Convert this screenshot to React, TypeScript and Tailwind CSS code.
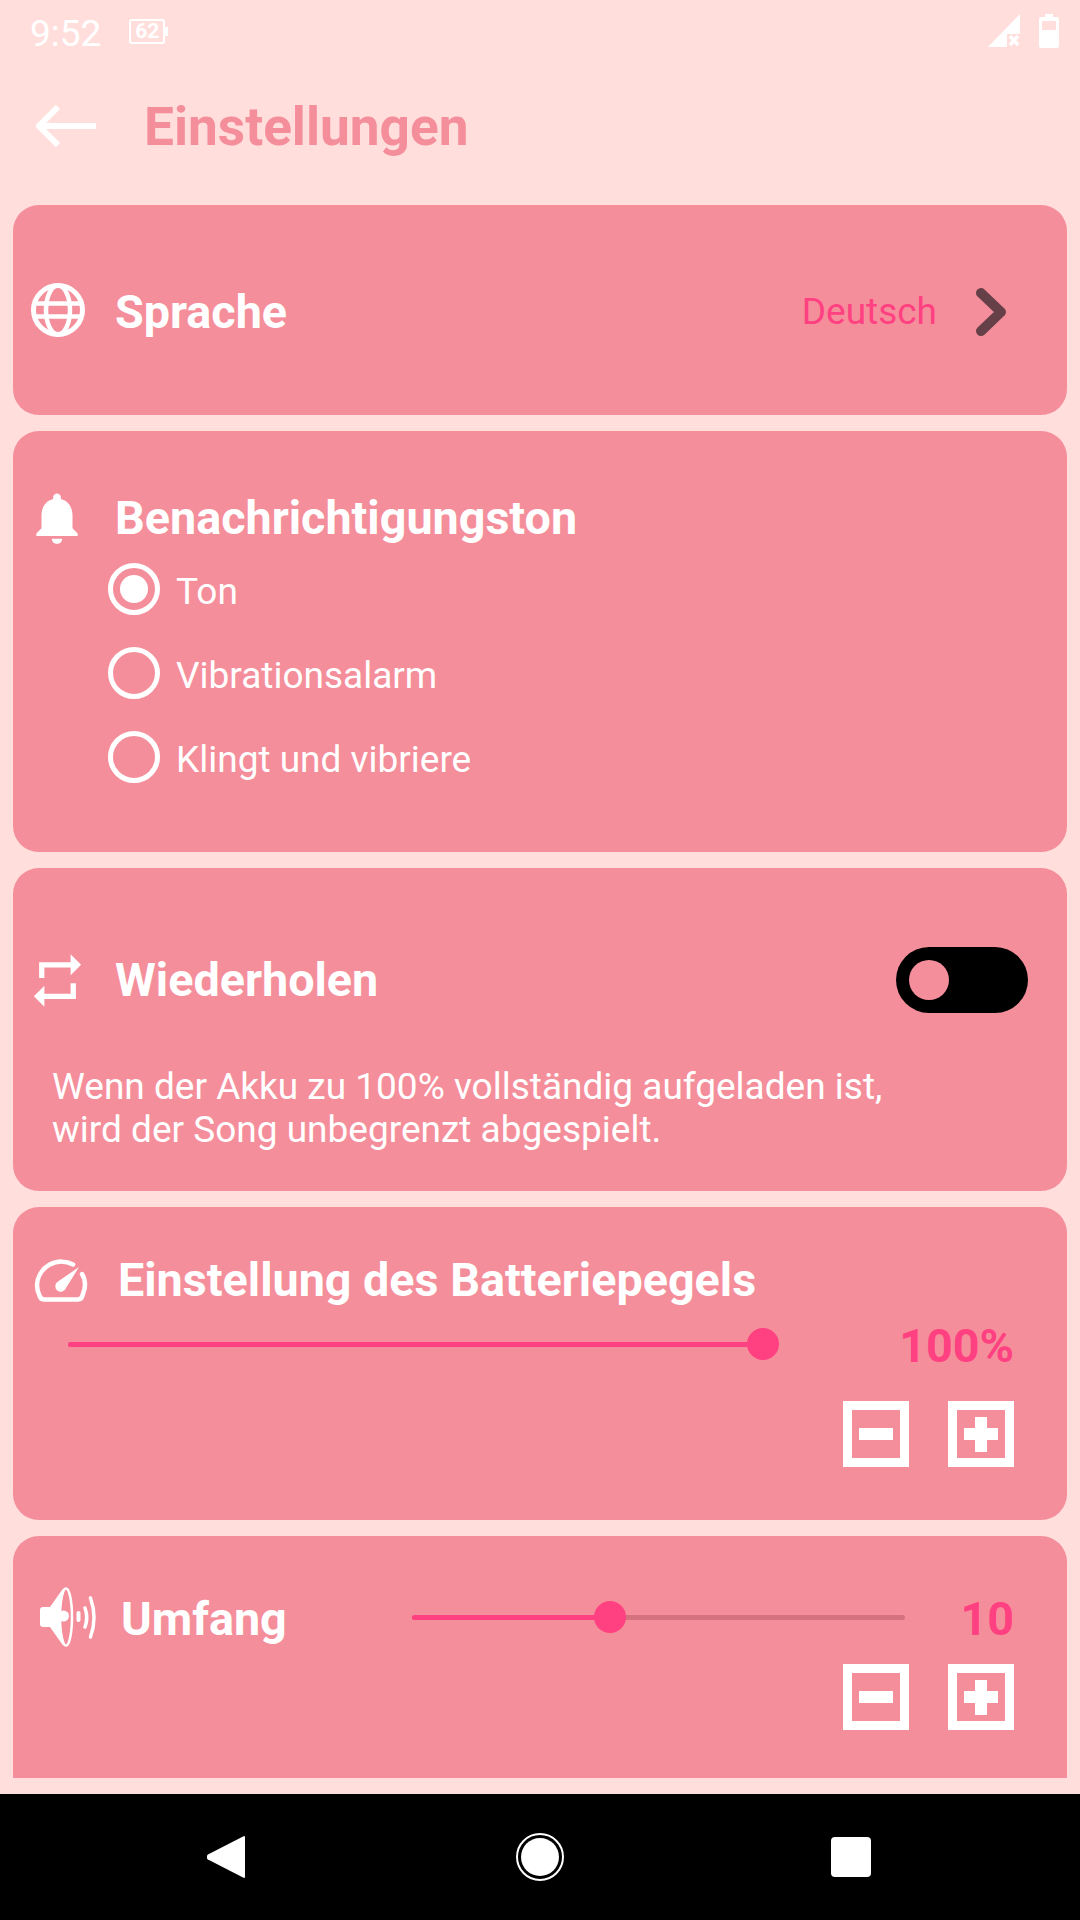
import React from "react";

const font = { fontFamily: "Roboto, sans-serif" };

function Globe() {
  return (
    <svg className="mb-[5px]" width="54" height="54" viewBox="0 0 54 54" fill="none" stroke="#fff" strokeWidth="5">
      <circle cx="27" cy="27" r="24.500" />
      <ellipse cx="27" cy="27" rx="12" ry="24.500" strokeWidth="4.500" />
      <path d="M4 20.500h46M4 33.500h46" strokeWidth="4.500" />
    </svg>
  );
}

function Bell() {
  return (
    <svg width="62" height="62" viewBox="0 0 24 24" fill="#fff">
      <path d="M12 22c1.100 0 2-.9 2-2h-4c0 1.100.89 2 2 2zm6-6v-5c0-3.070-1.640-5.640-4.500-6.320V4c0-.83-.67-1.500-1.500-1.500s-1.500.67-1.500 1.500v.68C7.630 5.360 6 7.920 6 11v5l-2 2v1h16v-1l-2-2z" />
    </svg>
  );
}

function Repeat() {
  return (
    <svg width="63" height="63" viewBox="0 0 24 24" fill="#fff">
      <path d="M7 7h10v3l4-4-4-4v3H5v6h2V7zm10 10H7v-3l-4 4 4 4v-3h12v-6h-2v4z" />
    </svg>
  );
}

function Gauge() {
  return (
    <svg width="54" height="44" viewBox="0 0 54 44" fill="none">
      <path d="M10 41.500h34a5 5 0 0 0 4.500-4C49.500 34 51 31 51 27c0-4-1-8-3-11M39 6.500A24.500 24.500 0 0 0 3 27c0 4 1 7.500 2.500 10.500a5 5 0 0 0 4.500 4" stroke="#fff" strokeWidth="4.500" strokeLinecap="round" />
      <path d="M45 9 32 30a5.500 5.500 0 1 1-8-6.500z" fill="#fff" />
    </svg>
  );
}

function Speaker() {
  return (
    <svg width="58" height="60" viewBox="0 0 58 60" fill="none">
      <path d="M3 20h7L22 3c1-1.500 2-2 3-1-3 8-4.500 17-4.500 28S22 50 25 58c-1 1-2 .5-3-1L10 40H3a3 3 0 0 1-3-3V23a3 3 0 0 1 3-3z" fill="#fff" />
      <circle cx="23.500" cy="29" r="5.500" fill="#fff" />
      <ellipse cx="26" cy="30" rx="6" ry="28.500" stroke="#fff" strokeWidth="2.500" />
      <path d="M38.500 26v7" stroke="#fff" strokeWidth="4" strokeLinecap="round" />
      <path d="M45 21q3.500 9.500 0 19" stroke="#fff" strokeWidth="3.500" strokeLinecap="round" />
      <path d="M50.500 11q7 19.500 0 39" stroke="#fff" strokeWidth="3.500" strokeLinecap="round" />
    </svg>
  );
}

function Radio({ on, label }: { on?: boolean; label: string }) {
  return (
    <div className="flex items-center h-[52px]">
      <div className="w-[52px] h-[52px] rounded-full border-[5px] border-white flex items-center justify-center">
        {on && <div className="w-[28px] h-[28px] rounded-full bg-white" />}
      </div>
      <span className="ml-[16px] mt-[4px] text-[37px] text-white leading-none">{label}</span>
    </div>
  );
}

function Box({ plus }: { plus?: boolean }) {
  return (
    <div className="relative w-[66px] h-[66px] border-[9px] border-white">
      <div className="absolute left-[7px] top-[18px] w-[34px] h-[12px] bg-white" />
      {plus && <div className="absolute left-[18px] top-[7px] w-[12px] h-[35px] bg-white" />}
    </div>
  );
}

function Boxes() {
  return (
    <div className="flex justify-end gap-[39px] pr-[53px]">
      <Box />
      <Box plus />
    </div>
  );
}

function Slider({ width, pos }: { width: number; pos: number }) {
  return (
    <div className="relative h-[5px] rounded-full bg-[#D4727F]" style={{ width }}>
      <div className="h-full rounded-full bg-[#FF4081]" style={{ width: pos }} />
      <div className="absolute top-[-14px] w-[32px] h-[32px] rounded-full bg-[#FF4081]" style={{ left: pos - 16 }} />
    </div>
  );
}

export default function App() {
  return (
    <div className="w-[1080px] h-[1920px] flex flex-col overflow-hidden bg-[#FFDEDC]" style={font}>
      {/* status bar */}
      <div className="h-[66px] shrink-0 flex items-start text-white">
        <span className="ml-[30px] mt-[15px] text-[37px] leading-[38px]">9:52</span>
        <div className="relative ml-[28px] mt-[19px] w-[36px] h-[25px] border-[2px] border-white rounded-[3px] flex items-center justify-center text-[21px] font-bold leading-none">
          62
          <div className="absolute right-[-5px] top-[6px] w-[3px] h-[9px] bg-white" />
        </div>
        <div className="ml-auto mt-[14px] flex gap-[19px] pr-[21px]">
          <svg width="32" height="33" viewBox="0 0 32 33">
            <path d="M32 0v20H19v13H0z" fill="#fff" />
            <path d="M22 22l8 9M30 22l-8 9" stroke="#fff" strokeWidth="3.500" />
          </svg>
          <svg width="20" height="34" viewBox="0 0 20 34">
            <path d="M6 0h8v3h4a2 2 0 0 1 2 2v27a2 2 0 0 1-2 2H2a2 2 0 0 1-2-2V5a2 2 0 0 1 2-2h4zM3 7v9h14V7z" fill="#fff" fillRule="evenodd" />
          </svg>
        </div>
      </div>

      {/* toolbar */}
      <div className="h-[139px] shrink-0 flex items-start">
        <svg className="ml-[36px] mt-[39px]" width="60" height="42" viewBox="0 0 60 42" fill="none" stroke="#fff" strokeWidth="6">
          <path d="M60 21H4M22 2 3 21l19 19" />
        </svg>
        <span className="ml-[48px] mt-[31px] text-[53.200px] leading-[60px] font-bold text-[#F58E9B]">Einstellungen</span>
      </div>

      {/* cards */}
      <div className="flex-1 flex flex-col gap-[16px] px-[13px] overflow-hidden">
        <section className="h-[210px] shrink-0 rounded-[26px] bg-[#F58E9B] flex items-center pl-[18px] pt-[5px]">
          <Globe />
          <span className="ml-[30px] text-[46.700px] leading-none font-bold text-white">Sprache</span>
          <span className="ml-auto mb-[2px] text-[37px] leading-none text-[#FF4081]">Deutsch</span>
          <svg className="ml-[38px] mr-[60px] mb-[2px]" width="32" height="50" viewBox="0 0 32 50" fill="none" stroke="#654048" strokeWidth="10" strokeLinecap="round" strokeLinejoin="round">
            <path d="M6 6l20 19L6 44" />
          </svg>
        </section>

        <section className="h-[421px] shrink-0 rounded-[26px] bg-[#F58E9B] flex flex-col">
          <div className="flex items-center mt-[56px] pl-[13px]">
            <Bell />
            <span className="ml-[27px] text-[46.700px] leading-[62px] font-bold text-white">Benachrichtigungston</span>
          </div>
          <div className="flex flex-col gap-[32px] mt-[14px] pl-[95px]">
            <Radio on label="Ton" />
            <Radio label="Vibrationsalarm" />
            <Radio label="Klingt und vibriere" />
          </div>
        </section>

        <section className="h-[323px] shrink-0 rounded-[26px] bg-[#F58E9B] flex flex-col">
          <div className="flex items-center mt-[79px] pl-[13px]">
            <Repeat />
            <span className="ml-[26px] text-[46.700px] leading-[63px] font-bold text-white">Wiederholen</span>
            <div className="ml-auto mr-[39px] w-[132px] h-[66px] rounded-full bg-black flex items-center pl-[13px]">
              <div className="w-[40px] h-[40px] rounded-full bg-[#F58E9B]" />
            </div>
          </div>
          <p className="mt-[52px] ml-[39px] text-[37px] leading-[43px] text-white">
            Wenn der Akku zu 100% vollständig aufgeladen ist,
            <br />
            wird der Song unbegrenzt abgespielt.
          </p>
        </section>

        <section className="h-[313px] shrink-0 rounded-[26px] bg-[#F58E9B] flex flex-col">
          <div className="flex items-center mt-[51px] pl-[21px]">
            <Gauge />
            <span className="ml-[30px] text-[46.700px] leading-[44px] font-bold text-white">Einstellung des Batteriepegels</span>
          </div>
          <div className="flex items-center mt-[20px] pl-[55px] pr-[53px] h-[45px]">
            <Slider width={695} pos={695} />
            <span className="ml-auto mt-[3px] text-[46.700px] leading-none font-bold text-[#FF4081]">100%</span>
          </div>
          <div className="mt-[34px]">
            <Boxes />
          </div>
        </section>

        <section className="h-[242px] shrink-0 rounded-t-[26px] bg-[#F58E9B] flex flex-col">
          <div className="flex items-center mt-[50px] h-[62px] pl-[27px] pr-[53px]">
            <Speaker />
            <span className="ml-[23px] mt-[4px] w-[168px] text-[46.700px] leading-none font-bold text-white">Umfang</span>
            <div className="ml-[123px]">
              <Slider width={493} pos={198} />
            </div>
            <span className="ml-auto mt-[4px] text-[46.700px] leading-none font-bold text-[#FF4081]">10</span>
          </div>
          <div className="mt-[16px]">
            <Boxes />
          </div>
        </section>
      </div>

      {/* nav bar */}
      <div className="h-[126px] mt-[16px] shrink-0 bg-black flex items-center">
        <svg className="ml-[207px]" width="38" height="42" viewBox="0 0 39 42" preserveAspectRatio="none">
          <path d="M38 0a1 1 0 0 1 1 1v40a1 1 0 0 1-1 1L1 23.500a3 3 0 0 1 0-5z" fill="#fff" />
        </svg>
        <div className="ml-[271px] w-[48px] h-[48px] rounded-full border-[2px] border-white flex items-center justify-center">
          <div className="w-[38px] h-[38px] rounded-full bg-white" />
        </div>
        <div className="ml-[267px] w-[40px] h-[40px] rounded-[4px] bg-white" />
      </div>
    </div>
  );
}
